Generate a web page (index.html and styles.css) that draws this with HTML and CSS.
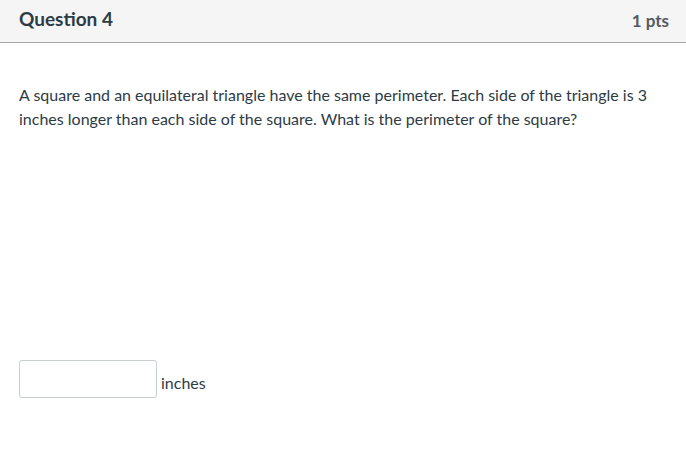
FILE: index.html
```html
<!DOCTYPE html>
<html>
<head>
<meta charset="utf-8">
<link rel="stylesheet" href="styles.css">
</head>
<body>
<div class="question">
  <div class="header">
    <h2 class="title">Question 4</h2>
    <div class="pts">1 pts</div>
  </div>
  <div class="content">
    <p class="text">A square and an equilateral triangle have the same perimeter. Each side of the triangle is 3 inches longer than each side of the square. What is the perimeter of the square?</p>
    <div class="answer">
      <input class="box" type="text">
      <span class="unit">inches</span>
    </div>
  </div>
</div>
</body>
</html>
```
FILE: styles.css
```css
html, body {
  margin: 0;
  padding: 0;
  background: #fff;
}
body {
  font-family: Lato, "Noto Sans", sans-serif;
  color: #2d3b45;
}
.header {
  display: flex;
  align-items: center;
  justify-content: space-between;
  height: 42px;
  padding: 0 17px 0 19px;
  background: #f5f5f5;
  border-bottom: 1px solid #a5a5a5;
}
.title {
  margin: 0 0 5px 0;
  font-size: 19px;
  font-weight: 700;
  color: #2d3b45;
}
.pts {
  font-size: 17px;
  font-weight: 700;
  color: #555a5f;
  margin-bottom: 2px;
}
.content {
  padding: 40px 19px 0 19px;
}
.text {
  margin: 0;
  font-size: 16px;
  line-height: 24px;
}
.answer {
  display: flex;
  align-items: center;
  margin-top: 229px;
}
.box {
  box-sizing: border-box;
  width: 138px;
  height: 38px;
  margin: 0;
  border: 1px solid #c7cdd1;
  border-radius: 3px;
  background: #fff;
}
.unit {
  margin-left: 4px;
  font-size: 16px;
  padding-top: 6px;
}
```
